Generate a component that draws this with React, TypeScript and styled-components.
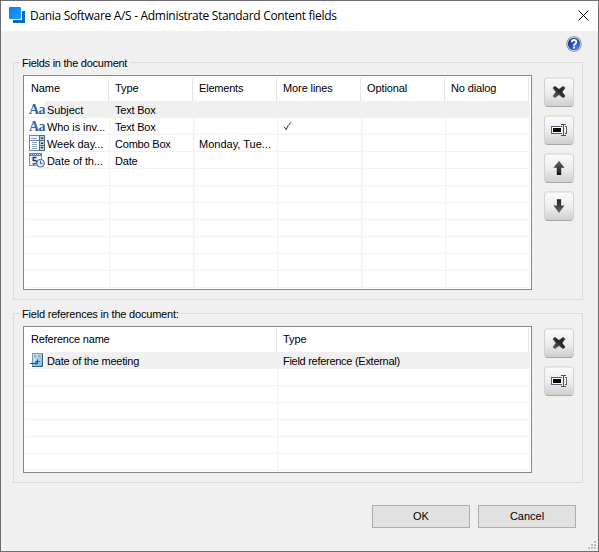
import React from "react";
import styled, { createGlobalStyle } from "styled-components";

const GlobalStyle = createGlobalStyle`
  * { box-sizing: border-box; }
  body {
    margin: 0;
    background: #f0f0f0;
    color: #000;
    font: 11px/13px "Liberation Sans", Arial, sans-serif;
  }
  svg { display: block; }
`;

const Dialog = styled.div`
  width: 599px;
  height: 552px;
  display: flex;
  flex-direction: column;
  background: #f0f0f0;
  border: 1px solid #6d6d70;
  overflow: hidden;
  position: relative;
`;

const TitleBar = styled.header`
  height: 30px;
  flex: none;
  display: flex;
  align-items: center;
  padding: 0 9px 2px 8px;
  background: #fff;
`;

const Title = styled.h1<{ $spacing: number }>`
  margin: 0 auto 0 5px;
  padding-top: 1px;
  font: 12px/16px "Open Sans", "Noto Sans", sans-serif;
  letter-spacing: ${(p) => p.$spacing}px;
  white-space: pre;
`;

const HelpRow = styled.div`
  height: 25px;
  flex: none;
  display: flex;
  justify-content: flex-end;
  padding: 5px 16px 0 0;
`;

const Group = styled.fieldset<{ $height: number; $gap: number }>`
  height: ${(p) => p.$height}px;
  width: 570px;
  flex: none;
  min-width: 0;
  margin: 0 0 ${(p) => p.$gap}px 12px;
  border: 1px solid #dcdcdc;
  padding: 0 8px 0 9px;
`;

const Legend = styled.legend<{ $spacing: number; $width: number }>`
  width: ${(p) => p.$width}px;
  height: 13px;
  margin-left: -3px;
  padding: 1px 0 0 2px;
  white-space: nowrap;
  letter-spacing: ${(p) => p.$spacing}px;
`;

const GroupBody = styled.div`
  display: flex;
  align-items: flex-start;
  padding-top: 6px;
`;

const ListView = styled.div`
  width: 509px;
  flex: none;
  background: #fff;
  border: 1px solid #828790;
  padding-bottom: 1px;
`;

const Header = styled.div<{ $columns: string }>`
  height: 25px;
  display: grid;
  grid-template-columns: ${(p) => p.$columns};
  padding: 1px 0 0;
`;

const HeadCell = styled.div<{ $spacing?: number }>`
  border-right: 1px solid #e5e5e5;
  padding: 5px 0 0 6px;
  white-space: nowrap;
  letter-spacing: ${(p) => p.$spacing ?? 0}px;

  &:first-child { padding-left: 7px; }
`;

const Row = styled.div<{ $columns: string; $selected?: boolean }>`
  height: 17px;
  width: 505px;
  margin-left: 1px;
  display: grid;
  grid-template-columns: ${(p) => p.$columns};
  background: ${(p) => (p.$selected ? "linear-gradient(90deg, #fff 20px, #f0f0f0 20px)" : "#fff")};
`;

const Cell = styled.div<{ $spacing?: number }>`
  min-width: 0;
  display: flex;
  border-right: 1px solid #f0f0f0;
  border-bottom: 1px solid #f0f0f0;
  padding: 3px 0 0 5px;
  white-space: nowrap;
  letter-spacing: ${(p) => p.$spacing ?? -0.2}px;

  &:first-child { padding: 0; }
`;

const IconSlot = styled.span`
  width: 22px;
  height: 16px;
  flex: none;
  padding-left: 4px;
`;

const Label = styled.span<{ $spacing?: number }>`
  padding-top: 3px;
  letter-spacing: ${(p) => p.$spacing ?? -0.2}px;
`;

const FontGlyph = styled.span`
  display: block;
  color: #3465a4;
  font: bold 14px/17px "Liberation Serif", serif;
  letter-spacing: -0.6px;
`;

const Tools = styled.div<{ $top: number }>`
  display: flex;
  flex-direction: column;
  gap: 8px;
  margin: ${(p) => p.$top}px 0 0 12px;
`;

const ToolButton = styled.button`
  width: 30px;
  height: 30px;
  padding: 0;
  display: grid;
  place-items: center;
  border: 1px solid;
  border-color: #dedede #d2d2d2 #a9a9a9;
  border-radius: 4px;
  background: linear-gradient(#fbfbfb, #ececec 55%, #cfcfcf);
  box-shadow: inset 0 1px #e8e8e8;
`;

const Footer = styled.footer`
  display: flex;
  justify-content: flex-end;
  gap: 8px;
  margin-top: 22px;
  padding-right: 22px;
`;

const PushButton = styled.button`
  width: 98px;
  height: 23px;
  padding: 0 0 1px;
  border: 1px solid #adadad;
  background: #e1e1e1;
  color: #000;
  font: 11px/13px "Liberation Sans", Arial, sans-serif;
`;

const SizeGrip = styled.svg`
  position: absolute;
  right: 2px;
  bottom: 2px;
`;

const AppIcon = () => (
  <svg width="16" height="16" viewBox="0 0 16 16">
    <defs>
      <linearGradient id="app" x1="0" y1="0" x2="1" y2="1">
        <stop stopColor="#0b7df0" />
        <stop offset="1" stopColor="#19a0ff" />
      </linearGradient>
    </defs>
    <path d="M13 4h3v12H4v-3h9z" fill="#086dc5" />
    <rect width="12" height="12" rx="1" fill="url(#app)" />
  </svg>
);

const CloseIcon = () => (
  <svg width="11" height="11" viewBox="0 0 11 11" stroke="#000" strokeWidth="1">
    <path d="M.5.5l10 10M10.5.5l-10 10" />
  </svg>
);

const HelpIcon = () => (
  <svg width="16" height="16" viewBox="0 0 16 16">
    <defs>
      <radialGradient id="help" cx=".65" cy=".7" r=".75">
        <stop stopColor="#4b7ce8" />
        <stop offset=".6" stopColor="#2349bd" />
        <stop offset="1" stopColor="#172c86" />
      </radialGradient>
    </defs>
    <circle cx="8" cy="8" r="7.7" fill="#85888f" />
    <circle cx="8" cy="8" r="7" fill="#c9cdd5" />
    <circle cx="8" cy="8" r="6.1" fill="url(#help)" />
    <path d="M5.8 6.2c.1-3 4.7-2.9 4.5-.1C10.2 7.7 8.1 7.600 8 9.600" fill="none" stroke="#fff" strokeWidth="1.8" />
    <rect x="7.1" y="10.700" width="1.900" height="1.800" fill="#fff" />
  </svg>
);

const ComboIcon = () => (
  <svg width="16" height="16" viewBox="0 0 16 16">
    <rect x=".5" y=".5" width="15" height="15" fill="#fff" stroke="#7184a5" />
    <path d="M1 1h9v4H1z" fill="#edf3fb" />
    <path d="M.5 5.500h10" stroke="#7184a5" />
    <path d="M2 3.500h6M3 7.500h5M3 9.500h5M3 11.500h5M3 13.500h5" stroke="#93a5bf" />
    <path d="M10 0h6v16h-6z" fill="#52688c" />
    <path d="M11 1h4v4h-4zM11 6h4v4h-4zM11 11h4v4h-4z" fill="#c7d5e8" />
    <path d="M11 2.500h4L13 4.500zM11.300 9h3.400L13 7zM11.300 12h3.400L13 14z" fill="#263957" />
  </svg>
);

const DateIcon = () => (
  <svg width="16" height="16" viewBox="0 0 16 16">
    <rect x=".5" y="1.500" width="12" height="12" fill="#eef3fc" stroke="#8799b9" />
    <path d="M0 1h13v3H0z" fill="#5c7faf" />
    <path d="M2 2.500h9" stroke="#c8d9ed" strokeDasharray="1 1" />
    <path d="M7.500 5.500H4.200v3h1.500c3 0 2.300 3.500-.1 3.300H3.500" fill="none" stroke="#263448" strokeWidth="1.3" />
    <circle cx="11.500" cy="11.200" r="3.900" fill="#dce9f7" stroke="#436a9c" />
    <path d="M11.500 8.700v2.800h2" fill="none" stroke="#4b6484" />
  </svg>
);

const ReferenceIcon = () => (
  <svg width="16" height="16" viewBox="0 0 16 16">
    <defs>
      <linearGradient id="ref" x1="0" y1="0" x2="1" y2="1">
        <stop stopColor="#dcecf8" />
        <stop offset="1" stopColor="#7cb2dc" />
      </linearGradient>
    </defs>
    <rect x="3.5" y="1.500" width="10" height="13" fill="url(#ref)" stroke="#6d9bc2" />
    <path d="M13.500 2v12.5H3" fill="none" stroke="#286294" />
    <path d="M5 3l2.500 2.500m0-2.500L5 5.500M9 3l2.500 2.500m0-2.500L9 5.500" stroke="#a79363" strokeWidth=".9" />
    <path d="M1 11.500h6M8.500 7.500v4M6.500 9.500h4" stroke="#214e78" />
    <path d="M6.500 10l2.500 1.500L6.500 13z" fill="#214e78" />
  </svg>
);

const DeleteIcon = () => (
  <svg width="14" height="14" viewBox="0 0 14 14">
    <defs>
      <linearGradient id="del" x1="0" y1="1" x2="1" y2="0">
        <stop stopColor="#6a6a6a" />
        <stop offset=".6" stopColor="#222" />
        <stop offset="1" stopColor="#3b3b3b" />
      </linearGradient>
    </defs>
    <path
      d="M1.300 3.400Q1.200 1.700 3.100 1.600L7 4.400l3.900-2.800q2 0 1.800 1.800L9.900 7l2.800 3.600q.2 1.900-1.800 1.900L7 9.600l-3.900 2.900q-2 0-1.800-1.900L4.100 7z"
      fill="url(#del)"
      stroke="url(#del)"
      strokeWidth=".7"
      strokeLinejoin="round"
    />
  </svg>
);

const RenameIcon = () => (
  <svg width="16" height="14" viewBox="0 0 16 14" fill="none">
    <rect x=".5" y="3.500" width="15" height="7" fill="#fff" stroke="#5b5b72" />
    <path d="M2 5h8v4H2z" fill="#000" />
    <path d="M12.500 2v10" stroke="#e9e9e9" strokeWidth="3" />
    <path d="M12.500 1.500v11M10 1.500h5M10 12.500h5" stroke="#4d4d50" />
  </svg>
);

const ArrowIcon = ({ down = false }: { down?: boolean }) => (
  <svg width="14" height="16" viewBox="0 0 14 16">
    <defs>
      <linearGradient id={down ? "down" : "up"} x1="0" y1="0" x2="0" y2="1">
        <stop stopColor={down ? "#222" : "#666"} />
        <stop offset="1" stopColor={down ? "#666" : "#151515"} />
      </linearGradient>
    </defs>
    {down ? (
      <path d="M4.900 1.300h4.200v6.200h3.300L7 15 1.600 7.500h3.300z" fill="url(#down)" />
    ) : (
      <path d="M7 .8l5.500 7H9.200v7.300H4.800V7.800H1.500z" fill="url(#up)" />
    )}
  </svg>
);

const CheckIcon = () => (
  <svg width="9" height="11" viewBox="0 0 9 11">
    <path d="M1.200 5.800L3.200 8.800Q4.700 4.100 8 1.200" fill="none" stroke="#333" strokeWidth="1" />
  </svg>
);

const fieldHeadings = [
  { text: "Name", spacing: -0.1 },
  { text: "Type", spacing: -0.1 },
  { text: "Elements", spacing: -0.2 },
  { text: "More lines", spacing: -0.1 },
  { text: "Optional", spacing: -0.1 },
  { text: "No dialog", spacing: -0.15 },
];

const fields = [
  { icon: <FontGlyph>Aa</FontGlyph>, name: "Subject", type: "Text Box" },
  { icon: <FontGlyph>Aa</FontGlyph>, name: "Who is inv...", type: "Text Box", multiline: true },
  { icon: <ComboIcon />, name: "Week day...", type: "Combo Box", elements: "Monday, Tue..." },
  { icon: <DateIcon />, name: "Date of th...", type: "Date" },
];

const range = (n: number) => Array.from({ length: n }, (_, i) => i);
const fieldColumns = "85px repeat(5, 84px)";
const referenceColumns = "253px 252px";

export default function App() {
  return (
    <Dialog>
      <GlobalStyle />
      <TitleBar>
        <AppIcon />
        <Title $spacing={-0.31}>Dania Software A/S - Administrate Standard Content fields</Title>
        <CloseIcon />
      </TitleBar>
      <HelpRow>
        <HelpIcon />
      </HelpRow>
      <Group $height={244} $gap={7}>
        <Legend $spacing={-0.25} $width={110}>Fields in the document</Legend>
        <GroupBody>
          <ListView>
            <Header $columns={fieldColumns}>
              {fieldHeadings.map((h) => (
                <HeadCell key={h.text} $spacing={h.spacing}>{h.text}</HeadCell>
              ))}
            </Header>
            {range(11).map((i) => {
              const field = fields[i];
              return (
                <Row key={i} $columns={fieldColumns} $selected={i === 0}>
                  <Cell>
                    {field && <IconSlot>{field.icon}</IconSlot>}
                    <Label $spacing={-0.08}>{field?.name}</Label>
                  </Cell>
                  <Cell>{field?.type}</Cell>
                  <Cell $spacing={0}>{field?.elements}</Cell>
                  <Cell>{field?.multiline && <CheckIcon />}</Cell>
                  <Cell />
                  <Cell />
                </Row>
              );
            })}
          </ListView>
          <Tools $top={2}>
            <ToolButton><DeleteIcon /></ToolButton>
            <ToolButton><RenameIcon /></ToolButton>
            <ToolButton><ArrowIcon /></ToolButton>
            <ToolButton><ArrowIcon down /></ToolButton>
          </Tools>
        </GroupBody>
      </Group>
      <Group $height={176} $gap={0}>
        <Legend $spacing={-0.2} $width={161}>Field references in the document:</Legend>
        <GroupBody>
          <ListView>
            <Header $columns={referenceColumns}>
              <HeadCell $spacing={-0.2}>Reference name</HeadCell>
              <HeadCell $spacing={-0.1}>Type</HeadCell>
            </Header>
            {range(7).map((i) => (
              <Row key={i} $columns={referenceColumns} $selected={i === 0}>
                <Cell>
                  {i === 0 && <IconSlot><ReferenceIcon /></IconSlot>}
                  <Label>{i === 0 && "Date of the meeting"}</Label>
                </Cell>
                <Cell $spacing={-0.28}>{i === 0 && "Field reference (External)"}</Cell>
              </Row>
            ))}
          </ListView>
          <Tools $top={2}>
            <ToolButton><DeleteIcon /></ToolButton>
            <ToolButton><RenameIcon /></ToolButton>
          </Tools>
        </GroupBody>
      </Group>
      <Footer>
        <PushButton>OK</PushButton>
        <PushButton>Cancel</PushButton>
      </Footer>
      <SizeGrip width="8" height="8" viewBox="0 0 8 8" fill="#bfbfbf">
        <path d="M6 0h2v2H6zM3 3h2v2H3zM6 3h2v2H6zM0 6h2v2H0zM3 6h2v2H3zM6 6h2v2H6z" />
      </SizeGrip>
    </Dialog>
  );
}
